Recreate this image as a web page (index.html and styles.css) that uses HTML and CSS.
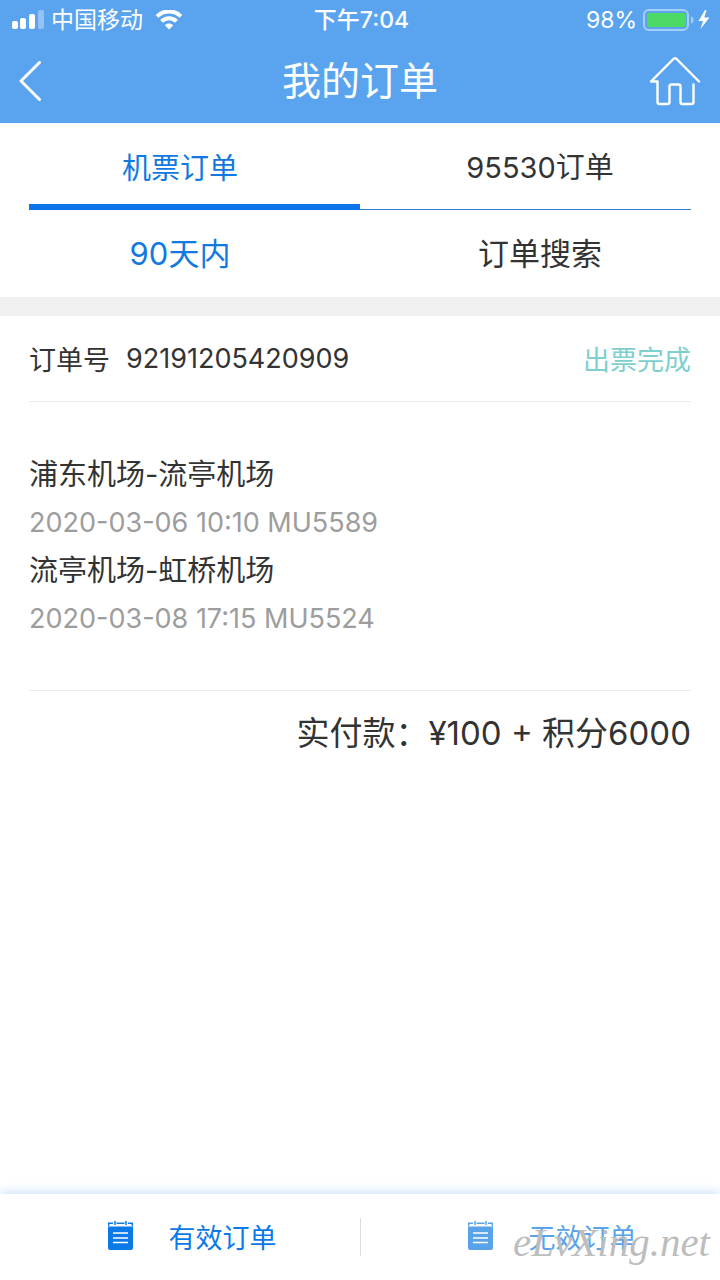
FILE: index.html
```
<!DOCTYPE html>
<html lang="zh-CN">
<head>
    <meta charset="UTF-8">
    <meta name="viewport" content="width=device-width, initial-scale=1.0">
    <title>我的订单</title>
    <link rel="stylesheet" href="styles.css">
</head>
<body>
    <header class="header">
        <div class="status-bar">
            <div class="status-left">
                <svg class="signal" width="32" height="20" viewBox="0 0 32 20" fill="#fff">
                    <rect x="0" y="11" width="6" height="8" rx="2"/>
                    <rect x="8" y="8" width="6" height="11" rx="2"/>
                    <rect x="17" y="4" width="6" height="15" rx="2"/>
                    <rect x="26" y="0" width="6" height="19" rx="2" opacity="0.35"/>
                </svg>
                <span>中国移动</span>
                <svg class="wifi" width="28" height="20" viewBox="0 0 28 20" fill="none" stroke="#fff" stroke-width="4">
                    <path d="M2 6.4 C8.8 -.3 19.2 -.3 26 6.4"/>
                    <path d="M6.6 11.4 C10.8 7.2 17.2 7.2 21.4 11.4"/>
                    <path d="M14 19.5 L9.8 15.3 C12.2 13 15.8 13 18.2 15.3 Z" fill="#fff" stroke="none"/>
                </svg>
            </div>
            <span class="status-time">下午7:04</span>
            <div class="status-right">
                <span>98%</span>
                <svg width="68" height="22" viewBox="0 0 68 22">
                    <rect x="1" y="1" width="44" height="20" rx="5" fill="none" stroke="#a6cff8" stroke-width="2"/>
                    <rect x="4" y="4" width="39" height="14" rx="2" fill="#4cd964"/>
                    <path d="M48 7.5 C51.5 8.5 51.5 13.5 48 14.5 Z" fill="#a6cff8"/>
                    <path d="M62 1 L55.5 12 H60 L57.5 20 L66.5 8.5 H61.3 L63.5 1 Z" fill="#fff"/>
                </svg>
            </div>
        </div>
        <div class="nav-bar">
            <a class="nav-link" href="#" aria-label="返回">
                <svg width="22" height="40" viewBox="0 0 22 40" fill="none" stroke="#fff" stroke-width="3" stroke-linecap="round" stroke-linejoin="round">
                    <path d="M20.5 1.5 L2 20 L20.5 38.5"/>
                </svg>
            </a>
            <h1>我的订单</h1>
            <a class="nav-link nav-home" href="#" aria-label="首页">
                <svg width="52" height="50" viewBox="0 0 52 50" fill="none" stroke="#fff" stroke-width="2.4" stroke-linecap="round" stroke-linejoin="round">
                    <path d="M50 25.5 L27.6 3 Q26 1.4 24.4 3 L2 25.5 H8.5 V46 Q8.5 48 10.5 48 H18.5 Q20.5 48 20.5 46 V30.5 Q20.5 28.5 22.5 28.5 H29.5 Q31.5 28.5 31.5 30.5 V46 Q31.5 48 33.5 48 H42.5 Q44.5 48 44.5 46 V28.5"/>
                </svg>
            </a>
        </div>
    </header>

    <nav class="tabs">
        <button class="tab active">机票订单</button>
        <button class="tab">95530订单</button>
    </nav>
    <div class="filters">
        <button class="filter active">90天内</button>
        <button class="filter">订单搜索</button>
    </div>

    <main class="order">
        <div class="order-head">
            <span class="order-label">订单号</span>
            <span>92191205420909</span>
            <span class="order-status">出票完成</span>
        </div>
        <div class="flights">
            <h2>浦东机场-流亭机场</h2>
            <p>2020-03-06 10:10 MU5589</p>
            <h2>流亭机场-虹桥机场</h2>
            <p>2020-03-08 17:15 MU5524</p>
        </div>
        <div class="order-total">实付款：<span>¥100 + 积分6000</span></div>
    </main>

    <footer class="bottom-bar">
        <button class="bottom-item">
            <svg width="25" height="30" viewBox="0 0 25 30">
                <path d="M.7 5 V2.2 H5 M8.5 2.2 H16.5 M20 2.2 H24.3 V5" fill="none" stroke="currentColor" stroke-width="1.4"/>
                <path d="M7 0 V4 M18 0 V4" stroke="currentColor" stroke-width="1.5"/>
                <path d="M0 5.5 H25 V27 Q25 29 23 29 H2 Q0 29 0 27 Z" fill="currentColor"/>
                <path d="M5 12 H20 M5 17 H20 M5 21.5 H20" stroke="#fff" stroke-width="1.6"/>
            </svg>
            <span>有效订单</span>
        </button>
        <button class="bottom-item inactive">
            <svg width="25" height="30" viewBox="0 0 25 30">
                <path d="M.7 5 V2.2 H5 M8.5 2.2 H16.5 M20 2.2 H24.3 V5" fill="none" stroke="currentColor" stroke-width="1.4"/>
                <path d="M7 0 V4 M18 0 V4" stroke="currentColor" stroke-width="1.5"/>
                <path d="M0 5.5 H25 V27 Q25 29 23 29 H2 Q0 29 0 27 Z" fill="currentColor"/>
                <path d="M5 12 H20 M5 17 H20 M5 21.5 H20" stroke="#fff" stroke-width="1.6"/>
            </svg>
            <span>无效订单</span>
        </button>
        <span class="watermark">eLvXing.net</span>
    </footer>
</body>
</html>
```

FILE: styles.css
```
* {
    box-sizing: border-box;
}

body {
    margin: 0;
    min-height: 100vh;
    display: flex;
    flex-direction: column;
    background-color: #fff;
    color: #333;
    font-family: Inter, "Noto Sans CJK SC", sans-serif;
    font-size: 27px;
    font-weight: 380;
}

h1, h2, p {
    margin: 0;
    font-weight: inherit;
}

button {
    margin: 0;
    padding: 0;
    border: none;
    background: none;
    color: inherit;
    font-family: inherit;
    font-weight: inherit;
    cursor: pointer;
}

svg {
    display: block;
    flex-shrink: 0;
}

/* Header */
.header {
    background-color: #5aa4ef;
    color: #fff;
}

.status-bar {
    display: grid;
    grid-template-columns: 1fr auto 1fr;
    align-items: center;
    height: 40px;
    padding: 0 9px 0 12px;
    font-size: 23px;
    line-height: 40px;
}

.status-left,
.status-right {
    display: flex;
    align-items: center;
}

.status-left {
    gap: 7px;
}

.wifi {
    margin-left: 5px;
}

.status-time {
    font-weight: 500;
}

.status-right {
    justify-content: flex-end;
    gap: 6px;
}

.nav-bar {
    display: grid;
    grid-template-columns: 1fr auto 1fr;
    align-items: center;
    height: 83px;
    padding: 0 19px 2px;
}

.nav-bar h1 {
    font-size: 39px;
    line-height: 80px;
}

.nav-home {
    justify-self: end;
}

/* Tabs */
.tabs {
    display: flex;
    margin: 0 29px;
    height: 87px;
    border-bottom: 1px solid #2a7fd0;
}

.tab {
    flex: 1;
    padding: 0 0 2px 29px;
    font-size: 29px;
}

.tab.active {
    padding: 0 29px 2px 0;
    margin-bottom: -1px;
    color: #1279e0;
    box-shadow: inset 0 -6px #0d75ec;
}

.filters {
    display: flex;
    height: 106px;
    border-bottom: 19px solid #f0f0f0;
}

.filter {
    flex: 1;
    padding-bottom: 4px;
    font-size: 31px;
}

.filter.active {
    color: #1279e0;
}

/* Order */
.order {
    flex: 1;
    padding: 0 29px;
}

.order-head {
    display: flex;
    align-items: center;
    height: 86px;
    border-bottom: 1px solid #ebebeb;
}

.order-label {
    margin-right: 16px;
}

.order-status {
    margin-left: auto;
    color: #7dd0cd;
}

.flights {
    padding: 49px 0 47px;
    border-bottom: 1px solid #ebebeb;
    line-height: 48px;
}

.flights h2 {
    font-size: 29px;
}

.flights p {
    color: #9d9d9d;
}

.order-total {
    font-size: 33px;
    line-height: 84px;
    text-align: right;
}

/* Bottom bar */
.bottom-bar {
    position: relative;
    display: flex;
    height: 86px;
    box-shadow: 0 -2px 10px #c8dffa;
}

.bottom-item {
    flex: 1;
    display: flex;
    align-items: center;
    justify-content: center;
    gap: 36px;
    padding: 0 0 2px 24px;
    color: #0b79e6;
    font-size: 27px;
}

.bottom-item.inactive {
    color: #58a3ea;
}

.bottom-item + .bottom-item {
    background: linear-gradient(#ddd, #ddd) left center / 1px 38px no-repeat;
}

.watermark {
    position: absolute;
    right: 10px;
    bottom: 14px;
    color: #bdbdbd;
    font-family: "Liberation Serif", serif;
    font-size: 41px;
    font-style: italic;
    line-height: 48px;
    pointer-events: none;
}
```
